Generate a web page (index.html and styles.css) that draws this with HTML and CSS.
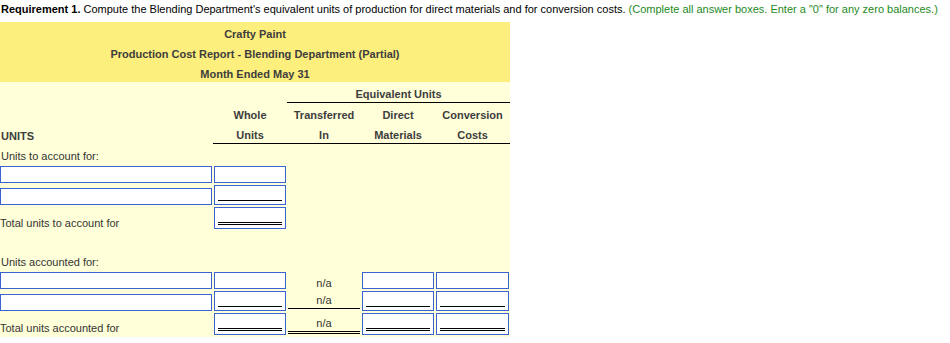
FILE: index.html
```html
<!DOCTYPE html>
<html lang="en">
<head>
  <meta charset="UTF-8">
  <title>Production Cost Report</title>
  <link rel="stylesheet" href="styles.css">
</head>
<body>
  <p class="req"><b>Requirement 1.</b> Compute the Blending Department's equivalent units of production for direct materials and for conversion costs. <span class="hint">(Complete all answer boxes. Enter a "0" for any zero balances.)</span></p>

  <div class="report">
    <div class="title">
      <div>Crafty Paint</div>
      <div>Production Cost Report - Blending Department (Partial)</div>
      <div>Month Ended May 31</div>
    </div>

    <table class="grid">
      <colgroup>
        <col class="c-label">
        <col class="c-num">
        <col class="c-num">
        <col class="c-num">
        <col class="c-last">
      </colgroup>
      <thead>
        <tr class="hrow">
          <th></th>
          <th></th>
          <th colspan="3" class="rule">Equivalent Units</th>
        </tr>
        <tr class="hrow">
          <th></th>
          <th>Whole</th>
          <th>Transferred</th>
          <th>Direct</th>
          <th>Conversion</th>
        </tr>
        <tr class="hrow">
          <th class="left">UNITS</th>
          <th class="rule">Units</th>
          <th class="rule">In</th>
          <th class="rule">Materials</th>
          <th class="rule">Costs</th>
        </tr>
      </thead>
      <tbody>
        <tr class="lrow">
          <td colspan="5">Units to account for:</td>
        </tr>
        <tr class="irow">
          <td><input class="field" type="text"></td>
          <td><div class="box"><input type="text"></div></td>
          <td></td><td></td><td></td>
        </tr>
        <tr class="irow">
          <td><input class="field" type="text"></td>
          <td><div class="box single"><input type="text"></div></td>
          <td></td><td></td><td></td>
        </tr>
        <tr class="irow">
          <td class="total">Total units to account for</td>
          <td><div class="box double"><input type="text"></div></td>
          <td></td><td></td><td></td>
        </tr>
        <tr class="gap"><td colspan="5"></td></tr>
        <tr class="lrow">
          <td colspan="5">Units accounted for:</td>
        </tr>
        <tr class="irow">
          <td><input class="field" type="text"></td>
          <td><div class="box"><input type="text"></div></td>
          <td><div class="na first">n/a</div></td>
          <td><div class="box"><input type="text"></div></td>
          <td><div class="box"><input type="text"></div></td>
        </tr>
        <tr class="irow">
          <td><input class="field" type="text"></td>
          <td><div class="box single"><input type="text"></div></td>
          <td><div class="na single">n/a</div></td>
          <td><div class="box single"><input type="text"></div></td>
          <td><div class="box single"><input type="text"></div></td>
        </tr>
        <tr class="irow last">
          <td class="total">Total units accounted for</td>
          <td><div class="box double"><input type="text"></div></td>
          <td><div class="na double">n/a</div></td>
          <td><div class="box double"><input type="text"></div></td>
          <td><div class="box double"><input type="text"></div></td>
        </tr>
      </tbody>
    </table>
  </div>
</body>
</html>
```

FILE: styles.css
```css
body {
  margin: 0;
  font-family: "Liberation Sans", Arial, sans-serif;
  font-size: 11px;
  color: #000;
  background: #fff;
}

.req {
  margin: 0;
  padding: 2px 0 0 1px;
  height: 20px;
  line-height: 14px;
}

.hint {
  color: #1e8a1e;
}

.report {
  width: 510px;
  color: #333;
}

.title {
  background-color: #fdef7e;
  font-weight: bold;
  text-align: center;
  color: #3d3d3d;
}

.title div {
  height: 20px;
  line-height: 24px;
}

.grid {
  width: 510px;
  border-collapse: collapse;
  background-color: #ffffd9;
  table-layout: fixed;
}

.c-label { width: 213px; }
.c-num { width: 74px; }
.c-last { width: 75px; }

.grid th,
.grid td {
  padding: 0;
  vertical-align: bottom;
}

.grid th {
  height: 20px;
  line-height: 16px;
  font-weight: bold;
  text-align: center;
  color: #3d3d3d;
}

.grid th.left {
  text-align: left;
  padding-left: 1px;
}

.grid th.rule {
  border-bottom: 1px solid #000;
}

.lrow td {
  height: 20px;
  line-height: 16px;
  padding-left: 1px;
}

.irow td {
  padding-top: 2px;
}

.irow.last td {
  padding-bottom: 2px;
}

.gap td {
  height: 21px;
}

.total {
  padding-left: 1px;
  line-height: 12px;
}

.irow.last .total {
  padding-bottom: 3px;
}

.field {
  display: block;
  box-sizing: border-box;
  width: 212px;
  height: 17px;
  margin: 0;
  border: 1px solid #3a62d0;
  background: #fff;
  padding: 0 2px;
  font: inherit;
}

.box {
  margin: 0 1px;
  border: 1px solid #3a62d0;
  background: #fff;
  height: 15px;
}

.box input {
  display: block;
  width: 100%;
  height: 14px;
  box-sizing: border-box;
  border: 0;
  padding: 0 2px;
  margin: 0;
  background: transparent;
  font: inherit;
}

.box.single,
.box.double {
  height: auto;
  padding: 0 3px 3px;
}

.box.single input {
  border-bottom: 1px solid #000;
  height: 15px;
}

.box.double input {
  border-bottom: 3px double #000;
  height: 17px;
}

.na {
  margin: 0 1px;
  text-align: center;
  line-height: 16px;
}

.na.first {
  line-height: 12px;
}

.na.single {
  border-bottom: 1px solid #000;
  margin-bottom: 2px;
}

.na.double {
  border-bottom: 3px double #000;
  margin-bottom: 1px;
}
```
